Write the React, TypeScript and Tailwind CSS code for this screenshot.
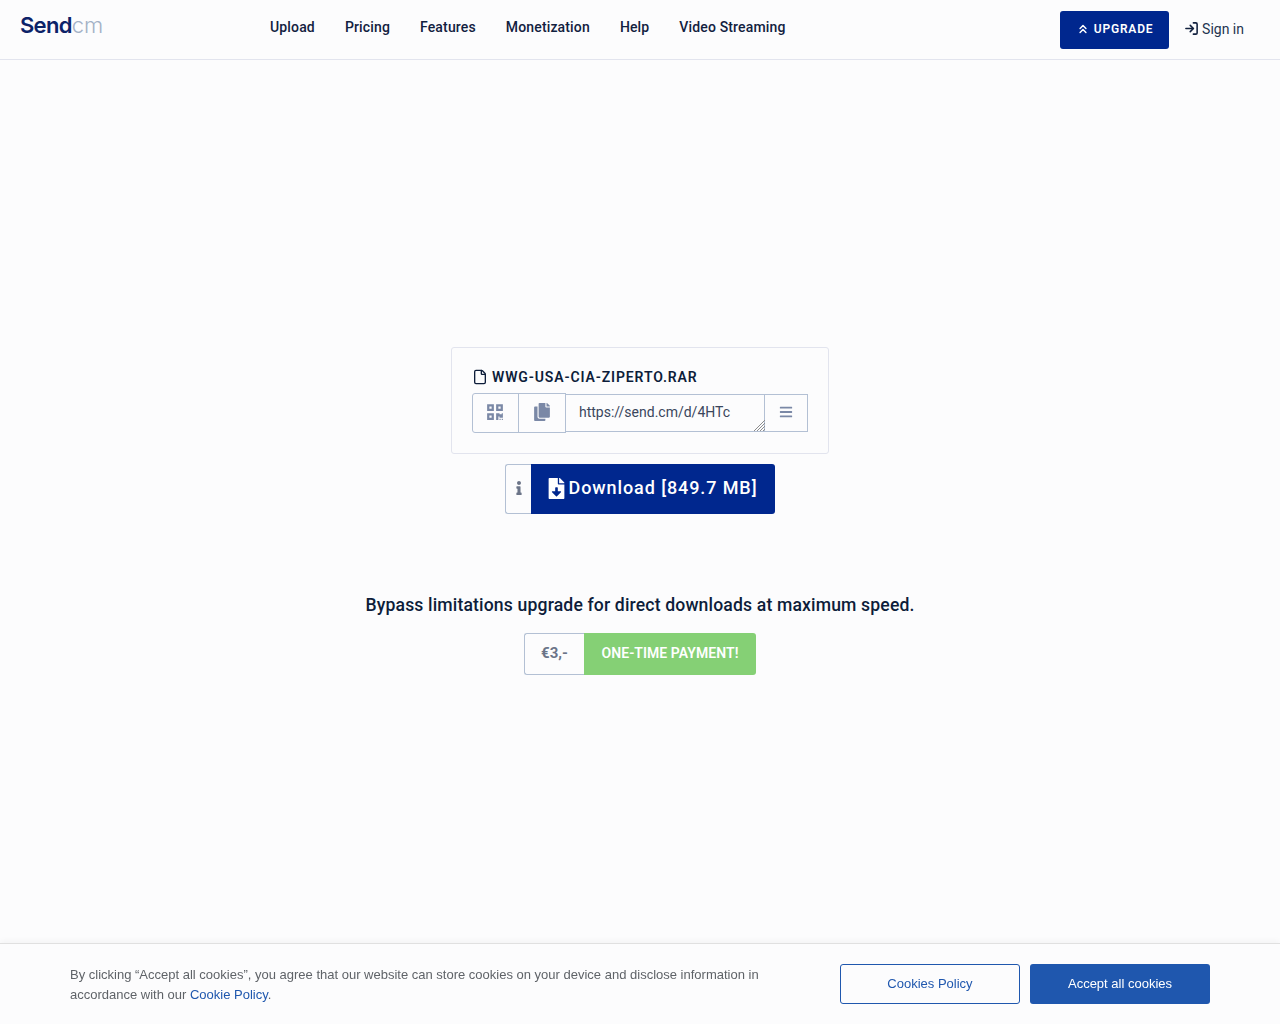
import { FaBars, FaCopy, FaFileDownload, FaInfo, FaQrcode } from "react-icons/fa";
import { ChevronsUp, File, LogIn } from "lucide-react";

const navLinks = ["Upload", "Pricing", "Features", "Monetization", "Help", "Video Streaming"];

const Header = () => {
    return (
        <header className="h-[60px] border-b border-[#e2e4ee] flex items-center">
            <div className="w-[270px] pl-5 pb-[10px] text-[22px] leading-[30px] font-['Inter',sans-serif]">
                <span className="font-semibold tracking-[-0.7px] text-[#0c2268]">Send</span>
                <span className="font-light tracking-[-0.1px] text-[#a3b1c6]">cm</span>
            </div>
            <nav className="flex gap-[30px] pb-[6px]">
                {navLinks.map((link) => (
                    <a key={link} className="text-sm font-medium tracking-[0.15px] text-[#12213f]">
                        {link}
                    </a>
                ))}
            </nav>
            <div className="ml-auto flex items-center pr-9">
                <button className="w-[109px] h-[38px] pb-[2px] rounded-[3px] bg-[#00278e] text-white text-xs font-semibold tracking-[0.8px] flex items-center justify-center gap-[4px]">
                    <ChevronsUp size={14} strokeWidth={2.5} />
                    UPGRADE
                </button>
                <a className="ml-[15px] pb-[2px] flex items-center gap-[2px] text-sm text-[#233450]">
                    <LogIn size={15} strokeWidth={2.5} className="text-[#12213f]" />
                    <span className="ml-px">Sign in</span>
                </a>
            </div>
        </header>
    );
};

const FileCard = () => {
    return (
        <section className="w-[378px] h-[107px] border border-[#e2e4ee] rounded-[3px] pl-5 pt-[19px]">
            <h1 className="flex items-center gap-[4px] h-[20px] pb-px text-sm font-semibold tracking-[0.87px] text-[#0d1d3a]">
                <File size={16} strokeWidth={2} />
                WWG-USA-CIA-ZIPERTO.RAR
            </h1>
            <div className="flex items-center mt-[6px] text-[#7a88a6]">
                <button className="w-[47px] h-[40px] pb-[2px] border border-[#b3c0d4] rounded-l-[3px] flex items-center justify-center">
                    <FaQrcode size={18} className="-ml-[2px]" />
                </button>
                <button className="w-[48px] h-[40px] pb-[2px] -ml-px border border-[#b3c0d4] flex items-center justify-center">
                    <FaCopy size={18} />
                </button>
                <div className="relative w-[200px] h-[38px] -ml-px">
                    <textarea
                        readOnly
                        value="https://send.cm/d/4HTc"
                        className="block w-full h-full border-y border-[#b3c0d4] bg-transparent px-[14px] py-[5px] text-sm leading-[24px] text-[#3a465c] outline-none resize-none overflow-hidden"
                    />
                    {/* resize grip */}
                    <svg width="11" height="11" viewBox="0 0 11 11" className="absolute right-0 bottom-px text-[#8d8d8d]" stroke="currentColor">
                        <path d="M0 11 11 0M3 11l8-8M6 11l5-5M9 11l2-2" />
                    </svg>
                </div>
                <button className="w-[44px] h-[38px] pb-[2px] -ml-px border border-[#b3c0d4] flex items-center justify-center">
                    <FaBars size={14} />
                </button>
            </div>
        </section>
    );
};

const DownloadButton = () => {
    return (
        <div className="flex h-[50px] mt-[10px]">
            <button className="w-[26px] pb-[2px] border border-r-0 border-[#b3c0d4] rounded-l-[3px] flex items-center justify-center text-[#6b7488]">
                <FaInfo size={14} />
            </button>
            <button className="w-[244px] pr-[3px] pb-[2px] bg-[#00278e] rounded-r-[3px] text-white text-lg font-medium tracking-[0.9px] flex items-center justify-center gap-[2px]">
                <FaFileDownload size={21} />
                Download [849.7 MB]
            </button>
        </div>
    );
};

const CookieBar = () => {
    return (
        <div className="fixed bottom-0 left-0 right-0 h-[81px] bg-[#fcfcfd] border-t border-[#e0e0e0] shadow-[0_-2px_6px_rgba(0,0,0,0.04)] px-[70px] flex items-center justify-between font-['Liberation_Sans',sans-serif] text-[13px]">
            <p className="w-[700px] pt-[2px] leading-[20px] text-[#5f6368]">
                By clicking “Accept all cookies”, you agree that our website can store cookies on your device and disclose information in accordance with our <a className="text-[#1f57ae]">Cookie Policy</a>.
            </p>
            <div className="flex gap-[10px]">
                <button className="w-[180px] h-[40px] border border-[#1f57ae] rounded-[3px] text-[#1f57ae]">Cookies Policy</button>
                <button className="w-[180px] h-[40px] bg-[#1f57ae] rounded-[3px] text-white">Accept all cookies</button>
            </div>
        </div>
    );
};

const App = () => {
    return (
        <div className="min-h-screen bg-[#fcfcfd] font-['Roboto',sans-serif]">
            <Header />
            <main className="flex flex-col items-center pt-[287px]">
                <FileCard />
                <DownloadButton />
                <p className="mt-[79px] h-[24px] text-[17.6px] leading-[24px] font-medium tracking-[0.15px] text-[#0d1d3a]">
                    Bypass limitations upgrade for direct downloads at maximum speed.
                </p>
                <div className="flex h-[42px] mt-[16px] text-sm font-semibold">
                    <span className="w-[60px] pb-px border border-r-0 border-[#b3c0d4] rounded-l-[3px] flex items-center justify-center text-[15px] font-bold text-[#6b7488]">
                        €3,-
                    </span>
                    <span className="w-[172px] pb-[2px] bg-[#85d075] rounded-r-[3px] text-white tracking-[0.05px] flex items-center justify-center">
                        ONE-TIME PAYMENT!
                    </span>
                </div>
            </main>
            <CookieBar />
        </div>
    );
};

export default App;
